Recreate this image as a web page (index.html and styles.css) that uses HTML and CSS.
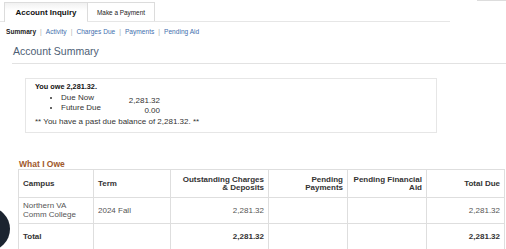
FILE: index.html
```html
<!DOCTYPE html>
<html lang="en">
<head>
    <meta charset="UTF-8">
    <meta name="viewport" content="width=device-width, initial-scale=1.0">
    <title>Account Inquiry</title>
    <link rel="stylesheet" href="styles.css">
</head>
<body>
    <div class="corner"></div>

    <div class="tabs">
        <div class="tab active">Account Inquiry</div>
        <div class="tab">Make a Payment</div>
    </div>

    <div class="subnav">
        <strong>Summary</strong><span class="sep">|</span><a href="#">Activity</a><span class="sep">|</span><a href="#">Charges Due</a><span class="sep">|</span><a href="#">Payments</a><span class="sep">|</span><a href="#">Pending Aid</a>
    </div>

    <h1>Account Summary</h1>

    <div class="owe-box">
        <div class="owe-total">You owe 2,281.32.</div>
        <div class="owe-detail">
            <ul class="owe-labels">
                <li>Due Now</li>
                <li>Future Due</li>
            </ul>
            <div class="owe-amounts">
                <div>2,281.32</div>
                <div>0.00</div>
            </div>
        </div>
        <div class="owe-note">** You have a past due balance of 2,281.32. **</div>
    </div>

    <h2>What I Owe</h2>

    <table>
        <thead>
            <tr>
                <th class="c-campus">Campus</th>
                <th class="c-term">Term</th>
                <th class="c-out num">Outstanding Charges<br>&amp; Deposits</th>
                <th class="c-pay num">Pending<br>Payments</th>
                <th class="c-aid num">Pending Financial<br>Aid</th>
                <th class="c-total num">Total Due</th>
            </tr>
        </thead>
        <tbody>
            <tr>
                <td>Northern VA<br>Comm College</td>
                <td>2024 Fall</td>
                <td class="num">2,281.32</td>
                <td></td>
                <td></td>
                <td class="num">2,281.32</td>
            </tr>
            <tr class="total">
                <td>Total</td>
                <td></td>
                <td class="num">2,281.32</td>
                <td></td>
                <td></td>
                <td class="num">2,281.32</td>
            </tr>
        </tbody>
    </table>

    <div class="chat-fab"></div>
</body>
</html>
```

FILE: styles.css
```css
* { box-sizing: border-box; }
body { margin: 0; width: 506px; height: 249px; overflow: hidden; position: relative; font-family: "Liberation Sans", Arial, sans-serif; color: #333; background: #fff; }

.corner { position: absolute; top: 0; right: 0; width: 29px; height: 1px; background: #ddd; }

.tabs { display: flex; align-items: flex-start; width: 450px; height: 22px; padding: 2px 0 0 4px; border-bottom: 1px solid #e6e6e6; }
.tab { height: 19px; padding: 0 9px; display: flex; align-items: center; justify-content: center; border: 1px solid #dcdcdc; border-bottom: none; background: #fff; font-size: 6.4px; color: #222; }
.tab.active { width: 83px; height: 20px; background: linear-gradient(#f1f1f1, #fff 40%); font-size: 8px; font-weight: bold; color: #111; border-right: none; }
.tab:not(.active) { width: 68px; }

.subnav { padding: 6px 0 0 6px; height: 14px; font-size: 6.6px; line-height: 8px; color: #999; }
.subnav strong { color: #222; }
.subnav a { color: #3f6fae; text-decoration: none; }
.sep { margin: 0 4px; color: #aaa; }

h1 { margin: 9px 0 0 12px; padding: 0 0 6px 1px; font-size: 10.5px; line-height: 12px; font-weight: normal; color: #4d5e74; border-bottom: 1px solid #e2e2e2; }

.owe-box { margin: 14px 0 0 25px; width: 412px; padding: 3px 9px 5px; border: 1px solid #e6e6e6; font-size: 8px; line-height: 10px; color: #333; }
.owe-total { font-size: 7.3px; font-weight: bold; color: #111; }
.owe-detail { display: flex; margin-top: 1px; }
.owe-labels { margin: 0; padding: 0 0 0 26px; width: 91px; list-style: disc; }
.owe-amounts { width: 34px; padding-top: 3.4px; text-align: right; }
.owe-note { margin-top: 1px; }

h2 { margin: 26px 0 0 19px; font-size: 8.5px; line-height: 10px; color: #a0582a; }

table { margin-left: 18px; width: 487px; border-collapse: collapse; table-layout: fixed; font-size: 8px; }
th, td { border: 1px solid #dedede; padding: 0 4px; text-align: left; vertical-align: middle; }
th { height: 28px; line-height: 8px; font-weight: bold; color: #333; }
td { height: 26px; line-height: 8.7px; color: #555; }
.num { text-align: right; }
.total td { font-weight: bold; color: #333; }
.c-campus { width: 75px; }
.c-term { width: 77px; }
.c-out { width: 98px; }
.c-pay { width: 79px; }
.c-aid { width: 79px; }
.c-total { width: 78px; }

.chat-fab { position: absolute; left: -34px; top: 207px; width: 44px; height: 44px; border-radius: 50%; background: #1b2430; }
```
